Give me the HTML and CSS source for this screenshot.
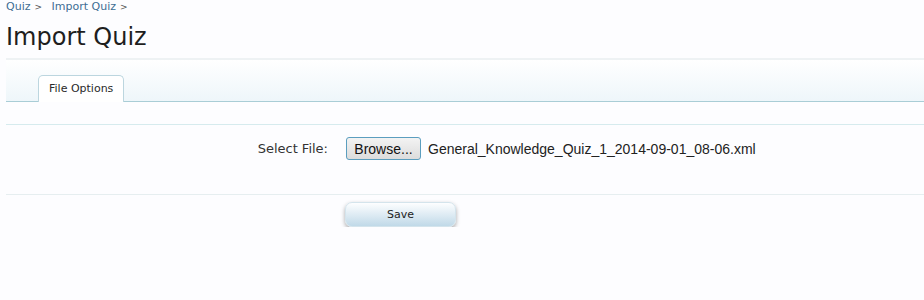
FILE: index.html
```html
<!DOCTYPE html>
<html lang="en">

<head>
    <meta charset="UTF-8">
    <meta name="viewport" content="width=device-width, initial-scale=1.0">
    <title>Import Quiz</title>
    <link rel="stylesheet" href="styles.css">
</head>

<body>
    <div class="page">
        <div class="breadcrumb">
            <a href="#" class="crumb">Quiz</a><span class="crumb-sep">&gt;</span>
            <a href="#" class="crumb">Import Quiz</a><span class="crumb-sep">&gt;</span>
        </div>

        <h1 class="page-title">Import Quiz</h1>

        <div class="tabs">
            <div class="tab active">File Options</div>
        </div>
        <div class="tab-spacer"></div>

        <div class="form-row">
            <label class="form-label">Select File:</label>
            <div class="file-field">
                <button class="browse-btn" type="button">Browse...</button>
                <span class="file-name">General_Knowledge_Quiz_1_2014-09-01_08-06.xml</span>
            </div>
        </div>

        <div class="form-actions">
            <button class="save-btn" type="button">Save</button>
        </div>
    </div>
</body>

</html>
```

FILE: styles.css
```css
* {
    margin: 0;
    padding: 0;
    box-sizing: border-box;
}

body {
    font-family: 'DejaVu Sans', Verdana, sans-serif;
    background-color: #fdfdff;
    color: #222;
}

.page {
    padding-left: 6px;
}

.breadcrumb {
    height: 14px;
    font-size: 11px;
    line-height: 14px;
}

.crumb {
    color: #3d6d93;
    text-decoration: none;
}

.crumb-sep {
    font-size: 9px;
    color: #555;
    margin-left: 4px;
    margin-right: 6px;
}

.page-title {
    margin-top: 8px;
    font-size: 24px;
    font-weight: normal;
    line-height: 30px;
    color: #1e1e1e;
    padding-bottom: 6px;
    border-bottom: 2px solid #eef2f4;
}

.tabs {
    height: 42px;
    display: flex;
    align-items: flex-end;
    padding-left: 32px;
    background: linear-gradient(to bottom, #ffffff, #eef6fa);
    border-bottom: 1px solid #a9cdd6;
}

.tab {
    height: 27px;
    margin-bottom: -1px;
    padding: 0 10px;
    font-size: 11px;
    line-height: 25px;
    color: #2a2a2a;
    background: #fff;
    border: 1px solid #bcd6df;
    border-bottom: none;
    border-radius: 5px 5px 0 0;
}

.tab-spacer {
    height: 23px;
    border-bottom: 1px solid #d6ebee;
}

.form-row {
    display: flex;
    align-items: center;
    padding: 12px 0 34px;
    border-bottom: 1px solid #e6eef0;
}

.form-label {
    width: 322px;
    margin-right: 18px;
    text-align: right;
    font-size: 13px;
    color: #333;
}

.file-field {
    display: flex;
    align-items: center;
}

.browse-btn {
    height: 23px;
    width: 75px;
    font-family: 'Liberation Sans', Arial, sans-serif;
    font-size: 14px;
    color: #111;
    background: linear-gradient(to bottom, #f3f3f3, #dcdcdc);
    border: 1px solid #5b9ebf;
    border-radius: 3px;
}

.file-name {
    margin-left: 7px;
    font-family: 'Liberation Sans', Arial, sans-serif;
    font-size: 14px;
    color: #222;
}

.form-actions {
    padding: 7px 0 0 339px;
}

.save-btn {
    width: 111px;
    height: 25px;
    font-family: 'DejaVu Sans', Verdana, sans-serif;
    font-size: 11px;
    color: #222;
    background: linear-gradient(to bottom, #fdfeff, #c0d9e8);
    border: 1px solid #d4e4ec;
    border-radius: 7px;
    box-shadow: 0 2px 4px rgba(0, 0, 0, 0.35);
}
```
